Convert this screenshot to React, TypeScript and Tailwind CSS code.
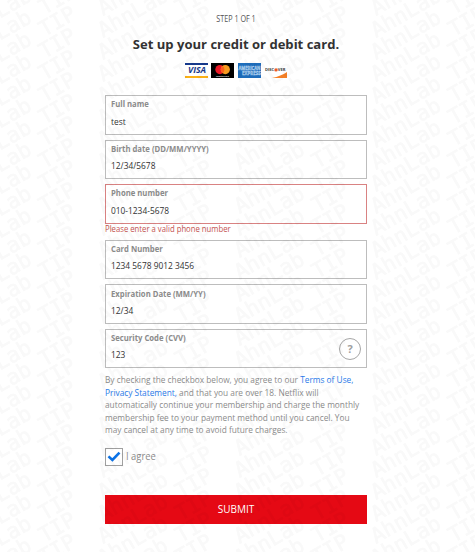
import { useState } from 'react';

const WATERMARK_COLUMNS = [-33.5, 103, 239.5, 376];
const WATERMARK_ROWS = Array.from({ length: 29 }, (_, i) => 16 + i * 22);

interface FieldProps {
  label: string;
  value: string;
  error?: string;
  help?: boolean;
}

function Field({ label, value, error, help }: FieldProps): React.ReactElement {
  const [text, setText] = useState(value);

  return (
    <div className="flex flex-col">
      <label
        className={`relative flex h-[39.6px] flex-col border pl-[5px] ${error ? 'border-[#d98282]' : 'border-[#bdbdbd]'}`}
      >
        <span className="mt-[2.2px] h-[12px] origin-left scale-x-[0.907] text-[8.5px] leading-[12px] font-bold text-[#8c8c8c]">{label}</span>
        <input
          value={text}
          onChange={(e): void => setText(e.target.value)}
          className="mt-[4.3px] h-[14px] w-[220px] origin-left scale-x-[0.93] text-[9px] leading-[14px] text-[#333] outline-none"
        />
        {help && (
          <span className="absolute top-[8.5px] right-[5px] flex size-[22px] items-center justify-center rounded-full border-[1.5px] border-[#a6a6a6] text-[11px] font-bold text-[#a0a0a0]">
            ?
          </span>
        )}
      </label>
      {error && (
        <p className="h-[11.1px] origin-left scale-x-[0.878] text-[8.8px] leading-[11px] whitespace-nowrap text-[#c4524f]">{error}</p>
      )}
    </div>
  );
}

function Cards(): React.ReactElement {
  return (
    <div className="flex gap-[3.3px]">
      <svg width="23" height="15" viewBox="0 0 23 15">
        <path d="M0 0h23v15H0z" fill="#fff" />
        <path d="M0 0h23v2H0z" fill="#173a8c" />
        <path d="M0 13h23v2H0z" fill="#fbb116" />
        <text x="3" y="10.3" fontSize="8.3" fontWeight="bold" fontStyle="italic" fill="#173a8c" textLength="18" lengthAdjust="spacingAndGlyphs">VISA</text>
      </svg>
      <svg width="23" height="15" viewBox="0 0 23 15">
        <path d="M0 0h23v15H0z" />
        <circle cx="8.9" cy="6.6" r="4.6" fill="#eb1826" />
        <circle cx="14.3" cy="6.6" r="4.6" fill="#f79a1f" />
        <path d="M11.6 2.9a4.6 4.6 0 0 1 0 7.4a4.6 4.6 0 0 1 0-7.4" fill="#fb5f1c" />
        <text x="5" y="13.6" fontSize="2.4" fontWeight="bold" fill="#ddd" textLength="13">mastercard</text>
      </svg>
      <svg width="23" height="15" viewBox="0 0 23 15">
        <path d="M0 0h23v15H0z" fill="#1e6dbb" />
        <g fontSize="5.4" fontWeight="bold" fill="#78aee0" stroke="#c0dcf3" strokeWidth="0.35">
          <text x="0.4" y="6.6" textLength="22" lengthAdjust="spacingAndGlyphs">AMERICAN</text>
          <text x="4" y="12.2" textLength="18.6" lengthAdjust="spacingAndGlyphs">EXPRESS</text>
        </g>
      </svg>
      <svg width="23" height="15" viewBox="0 0 23 15">
        <path d="M0 0h23v15H0z" fill="#fff" />
        <path d="M8 15C14 13.8 19 11.7 23 9v6z" fill="#f58026" />
        <text x="1" y="8.3" fontSize="4" fontWeight="bold" fill="#3c3c3c" textLength="9.2" lengthAdjust="spacingAndGlyphs">DISC</text>
        <circle cx="12" cy="6.9" r="1.7" fill="#ee5a24" />
        <text x="13.8" y="8.3" fontSize="4" fontWeight="bold" fill="#3c3c3c" textLength="7.6" lengthAdjust="spacingAndGlyphs">VER</text>
      </svg>
    </div>
  );
}

function Watermark(): React.ReactElement {
  return (
    <svg className="pointer-events-none absolute inset-0" width="475" height="552">
      <g fill="#000" stroke="#000" strokeWidth="0.7" opacity="0.025" fontSize="21.3" fontFamily="'DejaVu Sans Mono', monospace">
        {WATERMARK_COLUMNS.map((x) =>
          WATERMARK_ROWS.map((y) => (
            <text key={`${x}-${y}`} transform={`translate(${x} ${y}) rotate(-30)`}>
              AhnLab TIP
            </text>
          ))
        )}
      </g>
    </svg>
  );
}

function App(): React.ReactElement {
  const [agreed, setAgreed] = useState(true);

  return (
    <div className="relative h-[552px] w-[475px] overflow-hidden bg-white font-['Open_Sans',sans-serif]">
      <main className="ml-[105px] flex w-[262px] flex-col">
        <p className="mt-[12px] scale-x-[0.88] text-center text-[8.2px] leading-[13px] text-[#555]">STEP 1 OF 1</p>
        <h1 className="mt-[9px] text-center text-[13.05px] leading-[20px] font-bold whitespace-nowrap text-[#333]">
          Set up your credit or debit card.
        </h1>
        <div className="mt-[9px] flex justify-center">
          <Cards />
        </div>

        <form className="mt-[17.3px] flex flex-col">
          <div className="flex flex-col gap-[4.9px]">
            <Field label="Full name" value="test" />
            <Field label="Birth date (DD/MM/YYYY)" value="12/34/5678" />
            <Field label="Phone number" value="010-1234-5678" error="Please enter a valid phone number" />
            <Field label="Card Number" value="1234 5678 9012 3456" />
            <Field label="Expiration Date (MM/YY)" value="12/34" />
            <Field label="Security Code (CVV)" value="123" help />
          </div>

          <p className="mt-[6px] origin-left scale-x-[0.924] text-[9px] leading-[12.45px] whitespace-nowrap text-[#8c8c8c]">
            By checking the checkbox below, you agree to our <a className="text-[#2a7bea]">Terms of Use,</a>
            <br />
            <a className="text-[#2a7bea]">Privacy Statement,</a> and that you are over 18. Netflix will
            <br />
            automatically continue your membership and charge the monthly
            <br />
            membership fee to your payment method until you cancel. You
            <br />
            may cancel at any time to avoid future charges.
          </p>

          <label className="mt-[11.2px] flex h-[18px] items-center gap-[3px] text-[10px] text-[#8c8c8c]">
            <input type="checkbox" checked={agreed} onChange={(): void => setAgreed(!agreed)} className="sr-only" />
            <span className="flex size-[18px] items-center justify-center border border-[#a0a0a0]">
              {agreed && (
                <svg width="14" height="12" viewBox="0 0 14 12" fill="none" stroke="#0b73e8" strokeWidth="2.6">
                  <path d="M1.5 5.4L5.4 9L12.5 1.6" />
                </svg>
              )}
            </span>
            <span className="origin-left scale-x-[0.94]">I agree</span>
          </label>

          <button type="button" className="mt-[29px] h-[29px] pt-[1px] text-[10px] text-white bg-[#e50914]">
            SUBMIT
          </button>
        </form>
      </main>
      <Watermark />
    </div>
  );
}

export default App;
